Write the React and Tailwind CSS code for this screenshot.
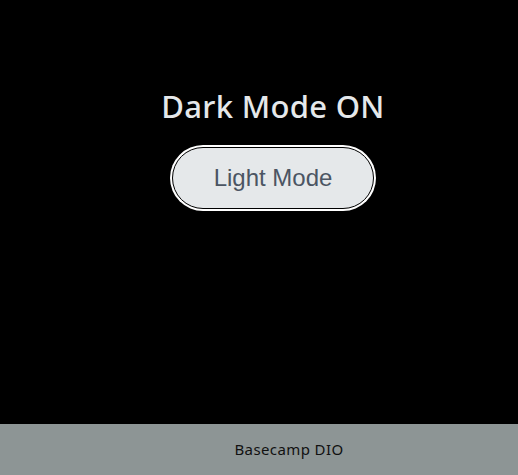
export default function App() {
  return (
    <div className="flex h-[475px] w-[518px] flex-col bg-black" style={{ fontFamily: '"Noto Sans", sans-serif' }}>
      <main className="flex flex-1 flex-col items-center pl-[28px] pt-[85px]">
        <h1 className="text-[31px] font-medium leading-[42px] tracking-[0.3px] text-[#e5e8ea]">Dark Mode ON</h1>
        <button className="mt-[20px] h-[62px] w-[202px] rounded-full border border-black bg-[#e5e8ea] text-[24px] text-[#4b5563] ring-2 ring-white" style={{ fontFamily: '"Liberation Sans", Arial, sans-serif' }}>
          Light Mode
        </button>
      </main>
      <footer className="flex h-[51px] items-center justify-center bg-[#8d9595] pl-[60px] text-[15px] tracking-[0.4px] text-[#111]">
        Basecamp DIO
      </footer>
    </div>
  );
}
